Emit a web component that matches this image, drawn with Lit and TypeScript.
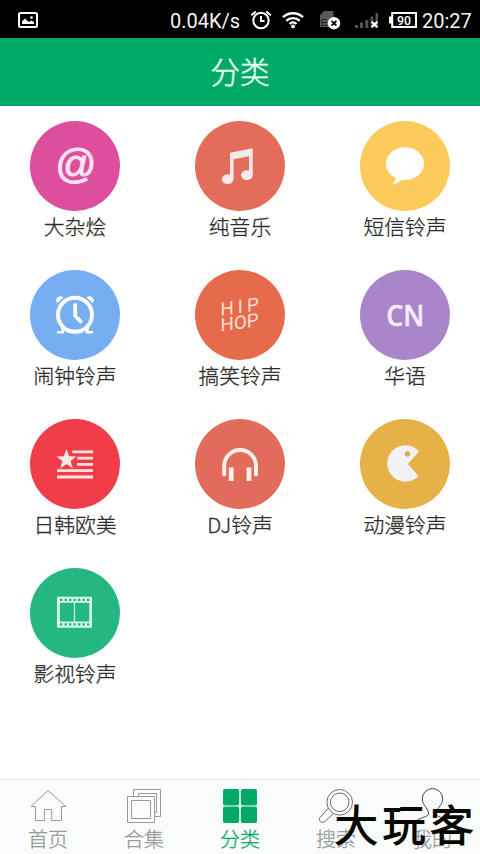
import { LitElement, html, css, svg } from "lit";
import { customElement } from "lit/decorators.js";

const categories = [
  { name: "大杂烩", color: "#dd4f9d", icon: svg`<text class="at" x="45.3" y="56.6" text-anchor="middle" textLength="41" lengthAdjust="spacingAndGlyphs">@</text>` },
  { name: "纯音乐", color: "#e46c5b", icon: svg`<g fill="#f4eaea"><path d="M35 31.7 57.7 27.3V54H54V35.2L38.6 38.2V58H35Z"/><ellipse cx="32.6" cy="58.2" rx="5.7" ry="5"/><ellipse cx="51.9" cy="54.3" rx="5.8" ry="5"/></g>` },
  { name: "短信铃声", color: "#fdcb5c", icon: svg`<g fill="#fff"><ellipse cx="45" cy="42.6" rx="19" ry="16.3"/><path d="M35 55 36 58 32 63.5C37 62.8 40 61 42.7 58Z"/></g>` },
  { name: "闹钟铃声", color: "#76aef1", icon: svg`<g fill="none" stroke="#fff"><circle cx="45" cy="44.8" r="17" stroke-width="4"/><path d="M45.2 35V46L50.6 51.4" stroke-width="3.8" stroke-linecap="round" stroke-linejoin="round"/><path d="M27 62.2H33L32.3 58M63 62.2H57L57.7 58" stroke-width="2.6"/></g><path fill="#fff" d="M27 33.2C24.5 28 29 24.5 33.6 27.2ZM63 33.2C65.5 28 61 24.5 56.4 27.2Z"/>` },
  { name: "搞笑铃声", color: "#e66b4d", icon: svg`<g class="hip" transform="translate(25.6 45.7) skewY(-8)"><text x="0" y="0" textLength="38" lengthAdjust="spacing">HIP</text><text x="0" y="15.8" textLength="38" lengthAdjust="spacingAndGlyphs">HOP</text></g>` },
  { name: "华语", color: "#a986ca", icon: svg`<text class="cn" x="26.3" y="56.3" textLength="38" lengthAdjust="spacingAndGlyphs">CN</text>` },
  { name: "日韩欧美", color: "#f03d49", icon: svg`<path fill="#ffeaea" d="M36.5 30 39.1 37.3 46.6 37.4 40.6 42 42.8 49.4 36.5 45 30.2 49.4 32.4 42 26.4 37.4 33.9 37.3Z"/><path stroke="#ffe3e3" stroke-width="2.8" d="M42.3 32.8H63M47.3 39.1H63M47 45.4H63M27 51.7H63M27 58H63"/>` },
  { name: "DJ铃声", color: "#e26b5b", icon: svg`<g fill="none" stroke="#fff0ec"><path d="M29.2 55.5V47A15.9 16 0 0 1 61 47V55.5" stroke-width="4" stroke-linecap="round"/><path d="M36.2 48.5V62M54 48.5V62" stroke-width="4.8"/></g>` },
  { name: "动漫铃声", color: "#e6b248", icon: svg`<path fill="#f2f2f4" d="M47.8 45 59 32.4A18.2 18.2 0 1 0 58.6 57Z"/><circle cx="47.5" cy="35" r="2.7" fill="#dda955"/>` },
  { name: "影视铃声", color: "#25b780", icon: svg`<path fill="#d5ffec" fill-rule="evenodd" d="M27 28.7H62V59.7H27ZM29.8 34.7V53.6H43.9V34.7ZM45.1 34.7V53.6H59.3V34.7Z"/><path stroke="#25a878" stroke-width="2.2" stroke-dasharray="2.3 2.2" d="M30 31.8H59.4M30 56.3H59.4"/>` },
];

const tabs = [
  { name: "首页", icon: svg`<path d="M7.5 19.5H3L20 3.5 38 19.5H33.5V33.5H23.7V22.5H16.4V33.5H7.5Z"/>` },
  { name: "合集", icon: svg`<path d="M3.5 9.5H30.5V35.5H3.5ZM7.5 13.5H26.5V31.5H7.5ZM9.5 9.5V2.5H36.5V29.5H30.5M14.5 9.5V6.5H32.5V25.5H30.5"/>` },
  { name: "分类", active: true, icon: svg`<g fill="#00aa66" stroke="none"><rect x="3" y="2" width="16.2" height="16.4" rx="2"/><rect x="20.8" y="2" width="16.2" height="16.4" rx="2"/><rect x="3" y="19.6" width="16.2" height="16.4" rx="2"/><rect x="20.8" y="19.6" width="16.2" height="16.4" rx="2"/></g>` },
  { name: "搜索", icon: svg`<g stroke="#6c6c6c"><circle cx="23.7" cy="15.3" r="12.8"/><circle cx="23.7" cy="15.3" r="9.3"/><path d="M12.3 21.2 4 30.4C2 34 6 37 9 34.4L17.4 26.6"/></g>` },
  { name: "我的", icon: svg`<path stroke="#444" d="M16.5 27.5C17.5 22 10.3 19 10.3 11.8A10.2 10.2 0 0 1 30.7 11.8C30.7 19 23 22 24 27.5 26 31 36 30.5 37.5 35.5M16.5 27.5C14 31 5 30.5 3.5 35.5"/>` },
];

@customElement("app-root")
export class AppRoot extends LitElement {
  static styles = css`
    :host { display: flex; flex-direction: column; width: 480px; height: 854px; position: relative; overflow: hidden; background: #fff; font-family: "Noto Sans CJK SC", sans-serif; }
    * { box-sizing: border-box; }
    svg { display: block; flex: none; }
    .status { height: 38px; flex: none; background: #000; color: #f4f4f4; display: flex; align-items: center; padding: 2px 8px 0 18px; font: 20px/36px Roboto, sans-serif; }
    .speed { margin-left: auto; width: 70px; white-space: nowrap; padding-top: 1px; }
    .alarm { margin-left: 10px; margin-right: 1px; }
    .wifi { margin-left: 9px; }
    .sim { margin-left: 15px; }
    .signal { margin-left: 14px; }
    .battery { margin-left: 10px; }
    .time { margin-left: 5px; width: 50px; white-space: nowrap; padding-top: 1px; }
    .battery text { font: 500 13px Roboto, sans-serif; fill: #fff; }
    .title { height: 68px; flex: none; background: #00aa66; color: #e6fff3; text-align: center; font-size: 29.5px; line-height: 65px; font-weight: 300; -webkit-text-stroke: .5px #e6fff3; }
    .grid { flex: 1; display: grid; grid-template-columns: repeat(3, 150px); column-gap: 15px; grid-auto-rows: 149px; padding-top: 15px; align-content: start; }
    .item { display: flex; flex-direction: column; align-items: center; }
    .disc { width: 90px; height: 90px; border-radius: 50%; }
    .label { font-size: 20.8px; line-height: 30px; color: #2c2c2c; font-weight: 300; white-space: nowrap; -webkit-text-stroke: .3px #2c2c2c; }
    .at { font: italic 400 40px "Liberation Sans", sans-serif; fill: #ffe3f5; stroke: #ffe3f5; stroke-width: 1px; }
    .cn { font: 600 29px "Open Sans", "Noto Sans", sans-serif; fill: #f8ebff; stroke: #f8ebff; stroke-width: .4px; }
    .hip text { font: 400 18.5px Roboto, sans-serif; fill: #ffe0d5; }
    .tabs { height: 75px; flex: none; border-top: 1px solid #dfe2e1; background: #fafcfb; display: grid; grid-template-columns: repeat(5, 96px); }
    .tab { display: flex; flex-direction: column; align-items: center; padding-top: 7px; color: #999; font-size: 20px; line-height: 30px; font-weight: 300; -webkit-text-stroke: .3px currentColor; }
    .tab svg { fill: none; stroke: #999; }
    .active { color: #00aa66; }
    .mark { position: absolute; left: 335px; top: 795px; font-size: 42.5px; line-height: 56px; letter-spacing: 5.2px; font-weight: 300; color: #080804; white-space: nowrap; -webkit-text-stroke: 2px #080804; text-shadow: 0 0 2px #e8dfc4, 0 0 2px #e8dfc4; }
  `;

  render() {
    return html`
      <div class="status">
        <svg width="20" height="16" viewBox="0 0 20 16"><rect x="1" y="1" width="18" height="14" rx="1.5" fill="none" stroke="#fff" stroke-width="2"/><path fill="#fff" d="M4 12V9.5L7 6.5 9.5 9 11.5 10 13 8.5 16 10V12Z"/><circle cx="13.5" cy="5.5" r="1.3" fill="#fff"/></svg>
        <span class="speed">0.04K/s</span>
        <svg class="alarm" width="22" height="20" viewBox="0 0 22 20"><g fill="none" stroke="#fff" stroke-width="2"><circle cx="11" cy="10.5" r="7.7"/><path d="M11 6V11H14.5M1.3 5.3 5.8 1.5M20.7 5.3 16.2 1.5"/></g></svg>
        <svg class="wifi" width="22" height="18" viewBox="0 0 22 18"><g fill="none" stroke="#fff" stroke-width="2.4"><path d="M1 6.2A14.5 14.5 0 0 1 21 6.2M4.3 9.8A9.6 9.6 0 0 1 17.7 9.8M7.5 13A5 5 0 0 1 14.5 13"/></g><circle cx="11" cy="15.4" r="1.9" fill="#fff"/></svg>
        <svg class="sim" width="22" height="20" viewBox="0 0 22 20"><path fill="#5a5a5a" d="M1 5 5 1H14.5V17H1Z"/><path d="M3 9.5H8M3 12.5H8M3 15.5H8M3 9V16" stroke="#222" stroke-width="1.2"/><circle cx="15" cy="13.2" r="6.2" fill="#fff"/><path d="M12.6 10.8 17.4 15.6M17.4 10.8 12.6 15.6" stroke="#000" stroke-width="1.8"/></svg>
        <svg class="signal" width="24" height="18" viewBox="0 0 24 18"><path fill="#555" d="M0 14H3V17H0ZM5 11.5H8V17H5ZM10.3 9H13.3V17H10.3ZM15.5 5.5H18.3V17H15.5ZM20.5 2H23V17H20.5Z"/><path d="M16.7 10.7 22.3 16.3M22.3 10.7 16.7 16.3" stroke="#fff" stroke-width="2.2"/></svg>
        <svg class="battery" width="28" height="16" viewBox="0 0 28 16"><path fill="#fff" d="M0 4.5H3V11.5H0Z"/><rect x="3.2" y="1" width="23.8" height="14" fill="none" stroke="#fff" stroke-width="2"/><text x="8" y="12.6" textLength="14" lengthAdjust="spacingAndGlyphs">90</text></svg>
        <span class="time">20:27</span>
      </div>
      <div class="title">分类</div>
      <div class="grid">
        ${categories.map((c) => html`<div class="item"><svg class="disc" viewBox="0 0 90 90" style="background:${c.color}">${c.icon}</svg><span class="label">${c.name}</span></div>`)}
      </div>
      <div class="tabs">
        ${tabs.map((t) => html`<div class="tab ${t.active ? "active" : ""}"><svg width="40" height="37" viewBox="0 0 40 37">${t.icon}</svg><span>${t.name}</span></div>`)}
      </div>
      <div class="mark">大玩客</div>
    `;
  }
}
